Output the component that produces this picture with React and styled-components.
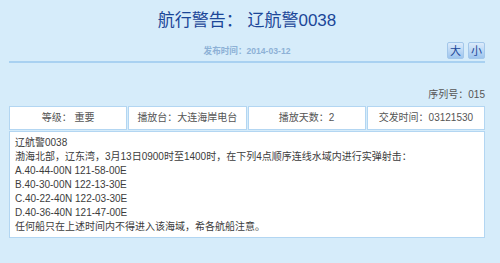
import React from 'react';
import styled, { createGlobalStyle } from 'styled-components';

const GlobalStyle = createGlobalStyle`
	html, body {
		margin: 0;
		padding: 0;
		background: #d6ecfa;
	}
	body {
		font-family: "Liberation Sans", "Noto Sans CJK SC", sans-serif;
	}
`;

const Page = styled.div`
	width: 500px;
	height: 263px;
	box-sizing: border-box;
	padding: 8px 15px 0 9px;
	background: #d6ecfa;
	overflow: hidden;
`;

const Title = styled.h1`
	margin: 0;
	font-size: 17px;
	line-height: 26px;
	font-weight: normal;
	text-align: center;
	color: #1b4698;
`;

const MetaRow = styled.div`
	display: grid;
	grid-template-columns: 1fr auto 1fr;
	align-items: center;
	height: 20px;
	padding-top: 6px;
	border-bottom: 2px solid #a9d1f1;
	padding-bottom: 1px;
`;

const PublishDate = styled.span`
	grid-column: 2;
	font-size: 8.6px;
	font-weight: bold;
	color: #8db1d6;
`;

const SizeButtons = styled.div`
	grid-column: 3;
	justify-self: end;
	display: flex;
	gap: 4px;
`;

const SizeButton = styled.button`
	width: 17px;
	height: 17px;
	padding: 0;
	border: 1px solid #a3c7ea;
	border-radius: 2px;
	background: linear-gradient(#dcebfb, #9ec5ee);
	color: #1b4698;
	font-family: "Noto Sans CJK SC", sans-serif;
	font-size: 11px;
	line-height: 15px;
	cursor: pointer;
`;

const Serial = styled.div`
	margin-top: 25px;
	margin-bottom: 4px;
	font-size: 10px;
	line-height: 14px;
	text-align: right;
	color: #555;
`;

const InfoTable = styled.div`
	display: grid;
	grid-template-columns: repeat(4, 1fr);
	gap: 1px;
`;

const InfoCell = styled.div`
	height: 24px;
	box-sizing: border-box;
	border: 1px solid #b3d6f2;
	background: #fff;
	font-size: 10px;
	line-height: 22px;
	text-align: center;
	color: #555;
`;

const Body = styled.div`
	grid-column: 1 / -1;
	border: 1px solid #b3d6f2;
	background: #fff;
	padding: 4px 5px 3px;
	font-size: 10px;
	line-height: 14px;
	color: #3c3c3c;
`;

const Line = styled.p`
	margin: 0;
	white-space: nowrap;
`;

const info = ['等级： 重要', '播放台：大连海岸电台', '播放天数：2', '交发时间：03121530'];

const lines = [
	'辽航警0038',
	'渤海北部，辽东湾，3月13日0900时至1400时，在下列4点顺序连线水域内进行实弹射击：',
	'A.40-44-00N 121-58-00E',
	'B.40-30-00N 122-13-30E',
	'C.40-22-40N 122-03-30E',
	'D.40-36-40N 121-47-00E',
	'任何船只在上述时间内不得进入该海域，希各航船注意。',
];

export default function App() {
	return (
		<Page>
			<GlobalStyle />
			<Title>航行警告： 辽航警0038</Title>
			<MetaRow>
				<PublishDate>发布时间：2014-03-12</PublishDate>
				<SizeButtons>
					<SizeButton>大</SizeButton>
					<SizeButton>小</SizeButton>
				</SizeButtons>
			</MetaRow>
			<Serial>序列号：015</Serial>
			<InfoTable>
				{info.map((text) => (
					<InfoCell key={text}>{text}</InfoCell>
				))}
				<Body>
					{lines.map((text) => (
						<Line key={text}>{text}</Line>
					))}
				</Body>
			</InfoTable>
		</Page>
	);
}
